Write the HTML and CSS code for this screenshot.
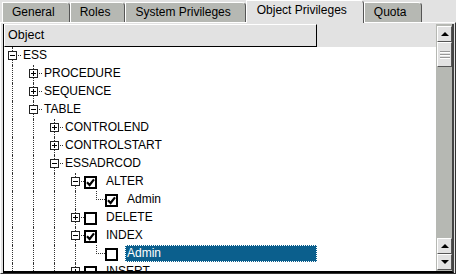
FILE: index.html
```html
<!DOCTYPE html>
<html lang="en">
<head>
    <meta charset="UTF-8">
    <title>User Properties</title>
    <link rel="stylesheet" href="styles.css">
</head>
<body>
    <div class="tabs">
        <div class="tab">General</div>
        <div class="tab">Roles</div>
        <div class="tab">System Privileges</div>
        <div class="tab active">Object Privileges</div>
        <div class="tab">Quota</div>
    </div>

    <div class="page">
        <div class="list">
            <div class="list-main">
                <div class="header">
                    <div class="col-btn">Object</div>
                    <div class="col-fill"></div>
                </div>
                <div class="tree">
                    <!-- level 0 -->
                    <div class="row">
                        <span class="cell node"><span class="exp"></span></span>
                        <span class="label">ESS</span>
                    </div>
                    <!-- level 1 -->
                    <div class="row">
                        <span class="cell g"></span>
                        <span class="cell node"><span class="exp plus"></span></span>
                        <span class="label">PROCEDURE</span>
                    </div>
                    <div class="row">
                        <span class="cell g"></span>
                        <span class="cell node"><span class="exp plus"></span></span>
                        <span class="label">SEQUENCE</span>
                    </div>
                    <div class="row">
                        <span class="cell g"></span>
                        <span class="cell node"><span class="exp"></span></span>
                        <span class="label">TABLE</span>
                    </div>
                    <!-- level 2 -->
                    <div class="row">
                        <span class="cell g"></span><span class="cell g"></span>
                        <span class="cell node"><span class="exp plus"></span></span>
                        <span class="label">CONTROLEND</span>
                    </div>
                    <div class="row">
                        <span class="cell g"></span><span class="cell g"></span>
                        <span class="cell node"><span class="exp plus"></span></span>
                        <span class="label">CONTROLSTART</span>
                    </div>
                    <div class="row">
                        <span class="cell g"></span><span class="cell g"></span>
                        <span class="cell node"><span class="exp"></span></span>
                        <span class="label">ESSADRCOD</span>
                    </div>
                    <!-- level 3: privileges -->
                    <div class="row">
                        <span class="cell g"></span><span class="cell g"></span><span class="cell g"></span>
                        <span class="cell node"><span class="exp"></span></span>
                        <span class="chk"><svg viewBox="0 0 9 9"><path d="M1 4.3 L3.6 7 L8 1.4"/></svg></span>
                        <span class="label">ALTER</span>
                    </div>
                    <div class="row">
                        <span class="cell g"></span><span class="cell g"></span><span class="cell g"></span><span class="cell g"></span>
                        <span class="cell node last"></span>
                        <span class="chk"><svg viewBox="0 0 9 9"><path d="M1 4.3 L3.6 7 L8 1.4"/></svg></span>
                        <span class="label">Admin</span>
                    </div>
                    <div class="row">
                        <span class="cell g"></span><span class="cell g"></span><span class="cell g"></span>
                        <span class="cell node"><span class="exp plus"></span></span>
                        <span class="chk"></span>
                        <span class="label">DELETE</span>
                    </div>
                    <div class="row">
                        <span class="cell g"></span><span class="cell g"></span><span class="cell g"></span>
                        <span class="cell node"><span class="exp"></span></span>
                        <span class="chk"><svg viewBox="0 0 9 9"><path d="M1 4.3 L3.6 7 L8 1.4"/></svg></span>
                        <span class="label">INDEX</span>
                    </div>
                    <div class="row">
                        <span class="cell g"></span><span class="cell g"></span><span class="cell g"></span><span class="cell g"></span>
                        <span class="cell node last"></span>
                        <span class="chk"></span>
                        <span class="label sel">Admin</span>
                    </div>
                    <div class="row">
                        <span class="cell g"></span><span class="cell g"></span><span class="cell g"></span>
                        <span class="cell node"><span class="exp plus"></span></span>
                        <span class="chk"></span>
                        <span class="label">INSERT</span>
                    </div>
                </div>
            </div>

            <div class="scrollbar">
                <div class="sb-btn up"></div>
                <div class="sb-thumb"><span class="grip"></span></div>
                <div class="sb-trough"></div>
                <div class="sb-btn up"></div>
                <div class="sb-btn down"></div>
            </div>
        </div>
    </div>
</body>
</html>
```

FILE: styles.css
```css
* {
    box-sizing: border-box;
}

body {
    margin: 0;
    width: 456px;
    height: 274px;
    overflow: hidden;
    background-color: #e2e2e2;
    font-family: "Liberation Sans", Arial, sans-serif;
    color: #000;
}

/* notebook tabs */
.tabs {
    display: flex;
    align-items: flex-end;
    height: 22px;
    padding-left: 2px;
}

.tab {
    height: 20px;
    padding: 0 14px 0 9px;
    font-size: 12px;
    line-height: 19px;
    white-space: nowrap;
    background-color: #b6b8b3;
    border-top: 1px solid #fff;
    border-left: 1px solid #fff;
    border-right: 1px solid #555;
    border-top-right-radius: 4px;
}

.tab.active {
    position: relative;
    z-index: 1;
    height: 23px;
    margin-bottom: -1px;
    padding: 0 16px 0 10px;
    background-color: #e2e2e2;
}

.page {
    height: 252px;
    padding: 1px 1px 0 2px;
    border-top: 1px solid #fff;
    border-left: 1px solid #fff;
    border-right: 1px solid #333;
    border-bottom: 1px solid #333;
}

/* list with header and scrollbar */
.list {
    display: flex;
    height: 249px;
    border-left: 1px solid #000;
    border-bottom: 2px solid #000;
    border-right: 2px solid #444;
}

.list-main {
    flex: 1;
    display: flex;
    flex-direction: column;
    min-width: 0;
}

.header {
    display: flex;
    height: 23px;
    flex: none;
}

.col-btn {
    width: 313px;
    padding-left: 3px;
    font-size: 12.5px;
    line-height: 20px;
    border-top: 1px solid #fff;
    border-left: 1px solid #fff;
    border-right: 1px solid #000;
    border-bottom: 1px solid #000;
}

.col-fill {
    flex: 1;
}

.tree {
    flex: 1;
    background-color: #fff;
    overflow: hidden;
}

.row {
    display: flex;
    width: 313px;
    height: 18px;
}

.cell {
    position: relative;
    flex: none;
    width: 21px;
    height: 18px;
}

/* vertical guide of an ancestor */
.cell.g::before {
    content: "";
    position: absolute;
    left: 8px;
    top: 0;
    bottom: 0;
    border-left: 1px dotted #333;
}

.cell.node {
    width: 17px;
}

.cell.node::before {
    content: "";
    position: absolute;
    left: 8px;
    top: 0;
    bottom: 0;
    border-left: 1px dotted #333;
}

.cell.node.last::before {
    bottom: auto;
    height: 9px;
}

.cell.node::after {
    content: "";
    position: absolute;
    left: 8px;
    right: 0;
    top: 8px;
    border-top: 1px dotted #333;
}

/* expander box */
.exp {
    position: absolute;
    z-index: 1;
    left: 4px;
    top: 4px;
    width: 9px;
    height: 9px;
    background-color: #fff;
    border: 1px solid #222;
}

.exp::before {
    content: "";
    position: absolute;
    left: 1px;
    top: 3px;
    width: 5px;
    height: 1px;
    background-color: #000;
}

.exp.plus::after {
    content: "";
    position: absolute;
    left: 3px;
    top: 1px;
    width: 1px;
    height: 5px;
    background-color: #000;
}

.chk {
    flex: none;
    width: 13px;
    height: 13px;
    margin-top: 3px;
    margin-right: 7px;
    border: 2px solid #000;
    background-color: #fff;
}

.chk svg {
    display: block;
    width: 9px;
    height: 9px;
    fill: none;
    stroke: #000;
    stroke-width: 2.2;
}

.label {
    height: 17px;
    padding: 0 2px;
    font-size: 12px;
    line-height: 17px;
    white-space: nowrap;
}

.label.sel {
    flex: 1;
    background-color: #0b5f8d;
    color: #fff;
    outline: 1px dotted #fff;
    outline-offset: -1px;
}

/* scrollbar */
.scrollbar {
    display: flex;
    flex-direction: column;
    width: 16px;
    padding: 2px 0 1px 1px;
    background-color: #b6b8b3;
}

.sb-btn,
.sb-thumb {
    display: flex;
    align-items: center;
    justify-content: center;
    flex: none;
    height: 16px;
    background-color: #e2e2e2;
    border-top: 1px solid #fff;
    border-left: 1px solid #fff;
    border-right: 1px solid #555;
    border-bottom: 1px solid #555;
}

.sb-btn.up::before {
    content: "";
    border-left: 4px solid transparent;
    border-right: 4px solid transparent;
    border-bottom: 4px solid #000;
}

.sb-btn.down::before {
    content: "";
    border-left: 4px solid transparent;
    border-right: 4px solid transparent;
    border-top: 4px solid #000;
}

.sb-thumb {
    height: 25px;
}

.grip {
    width: 10px;
    height: 8px;
    background: repeating-linear-gradient(#999 0 1px, #fff 1px 2px, transparent 2px 3px);
}

.sb-trough {
    flex: 1;
}
```
